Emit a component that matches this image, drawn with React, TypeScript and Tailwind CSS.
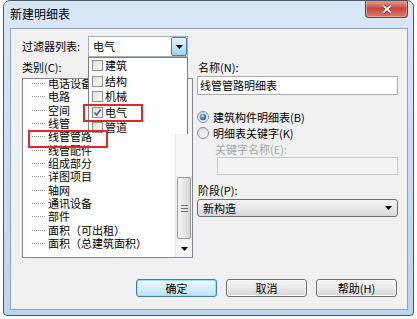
import React from "react";

const treeItems = [
  "电话设备",
  "电路",
  "空间",
  "线管",
  "线管管路",
  "线管配件",
  "组成部分",
  "详图项目",
  "轴网",
  "通讯设备",
  "部件",
  "面积（可出租）",
  "面积（总建筑面积）",
];

const filterItems = ["建筑", "结构", "机械", "电气", "管道"];

function DownArrow() {
  return (
    <svg width="7" height="4" viewBox="0 0 7 4">
      <path d="M0 0H7L3.5 4Z" fill="#000" />
    </svg>
  );
}

function UpArrow() {
  return (
    <svg width="7" height="4" viewBox="0 0 7 4">
      <path d="M0 4H7L3.5 0Z" fill="#000" />
    </svg>
  );
}

function RadioOn() {
  return (
    <svg width="12" height="12" viewBox="0 0 12 12">
      <defs>
        <linearGradient id="rOnBg" x1="0" y1="0" x2="1" y2="1">
          <stop offset="0" stopColor="#d0d0d0" />
          <stop offset="1" stopColor="#ffffff" />
        </linearGradient>
        <radialGradient id="rOnDot" cx="0.4" cy="0.35" r="0.7">
          <stop offset="0" stopColor="#b9e1fb" />
          <stop offset="0.5" stopColor="#3f8ad0" />
          <stop offset="1" stopColor="#1d4f8a" />
        </radialGradient>
      </defs>
      <circle cx="6" cy="6" r="5.5" fill="url(#rOnBg)" stroke="#8e8f8f" />
      <circle cx="6" cy="6" r="3.2" fill="url(#rOnDot)" />
    </svg>
  );
}

function RadioOff() {
  return (
    <svg width="12" height="12" viewBox="0 0 12 12">
      <defs>
        <linearGradient id="rOffBg" x1="0" y1="0" x2="1" y2="1">
          <stop offset="0" stopColor="#cfcfcf" />
          <stop offset="1" stopColor="#ffffff" />
        </linearGradient>
      </defs>
      <circle cx="6" cy="6" r="5.5" fill="url(#rOffBg)" stroke="#8e8f8f" />
      <circle cx="6" cy="6" r="3.5" fill="#ececec" />
    </svg>
  );
}

function Scrollbar() {
  return (
    <div className="w-[17px] flex flex-col bg-[#f5f5f5] border-l border-[#e8e8e8] shrink-0">
      <div className="h-[17px] flex items-center justify-center">
        <UpArrow />
      </div>
      <div className="h-[81px]" />
      <div className="h-[62px] mx-[1px] rounded-[2px] border border-[#979797] bg-gradient-to-r from-[#f6f6f6] to-[#d6d6d6] flex flex-col items-center justify-center gap-[2px]">
        <div className="w-[7px] h-px bg-[#6e6e6e]" />
        <div className="w-[7px] h-px bg-[#6e6e6e]" />
        <div className="w-[7px] h-px bg-[#6e6e6e]" />
      </div>
      <div className="flex-1" />
      <div className="h-[17px] flex items-center justify-center">
        <DownArrow />
      </div>
    </div>
  );
}

export default function App() {
  return (
    <div className="w-[417px] h-[319px] bg-white overflow-hidden font-['Noto_Sans_CJK_SC',sans-serif] text-[11px] leading-none text-black">
      <div className="ml-[3px] w-[411px] h-[316px] flex flex-col border border-[#4b5665] rounded-t-[7px] rounded-b-[4px] bg-gradient-to-b from-[#d8e7f6] to-[#bdd4ed] overflow-hidden">
        {/* Title bar */}
        <div className="h-[27px] flex justify-between items-start shrink-0">
          <span className="pl-[6px] pt-[6px] text-[12px] leading-[14px]">新建明细表</span>
          <div className="-mt-px mr-[5px] w-[43px] h-[18px] rounded-b-[4px] border border-t-0 border-[#6e3a34] bg-gradient-to-b from-[#e8a498] via-[#c8473b] to-[#d87a6a] flex items-center justify-center shadow-[inset_0_0_0_1px_rgba(255,255,255,0.35)]">
            <svg width="12" height="10" viewBox="0 0 12 10">
              <path d="M2 1.5 L10 8.5 M10 1.5 L2 8.5" stroke="#5a1e18" strokeWidth="3.4" />
              <path d="M2 1.5 L10 8.5 M10 1.5 L2 8.5" stroke="#ffffff" strokeWidth="2" />
            </svg>
          </div>
        </div>

        {/* Body */}
        <div className="flex">
          <div className="w-[6px] shrink-0" />
          <div className="relative w-[398px] h-[282px] shrink-0 border border-[#8ea3bd] bg-[#f0f0f0] pl-[11px] pr-[9px] pt-[7px] flex flex-col">
            {/* Filter row */}
            <div className="flex items-center h-[21px]">
              <span className="w-[66px]">过滤器列表:</span>
              <div className="w-[100px] h-[21px] flex items-center border border-[#a5acb5] bg-white">
                <span className="flex-1 pl-[4px]">电气</span>
                <div className="w-[16px] h-[19px] flex items-center justify-center border border-[#3c7fb1] rounded-[2px] bg-gradient-to-b from-[#e6f5fd] to-[#9fd3f1]">
                  <DownArrow />
                </div>
              </div>
            </div>

            {/* Main row */}
            <div className="flex mt-[3px]">
              {/* Left column */}
              <div className="w-[171px] flex flex-col shrink-0">
                <div className="h-[14px] leading-[14px]">类别(C):</div>
                <div className="mt-[4px] h-[180px] border border-[#828790] bg-white flex overflow-hidden">
                  <div className="flex-1 -mt-[2px] overflow-hidden">
                    {treeItems.map((t) => (
                      <div key={t} className="h-[13.33px] flex items-center">
                        <div className="ml-[9px] w-[13px] border-t border-dotted border-[#8a8a8a]" />
                        <span className="ml-[3px] whitespace-nowrap">{t}</span>
                      </div>
                    ))}
                  </div>
                  <Scrollbar />
                </div>
              </div>

              {/* Right column */}
              <div className="ml-[4px] w-[201px] flex flex-col shrink-0">
                <div className="h-[14px] leading-[14px] pl-[1px]">名称(N):</div>
                <div className="mt-[2px] h-[19px] border border-[#abadb3] bg-white pl-[2px] flex items-center">
                  线管管路明细表
                </div>
                <div className="mt-[15px] h-[14px] flex items-center">
                  <RadioOn />
                  <span className="ml-[4px]">建筑构件明细表(B)</span>
                </div>
                <div className="mt-[2px] h-[14px] flex items-center">
                  <RadioOff />
                  <span className="ml-[4px]">明细表关键字(K)</span>
                </div>
                <div className="mt-[2px] h-[14px] leading-[14px] pl-[18px] text-[#a3a3a3]">关键字名称(E):</div>
                <div className="mt-[1px] ml-[20px] h-[18px] border border-[#c9c9c9] bg-[#f3f3f3]" />
                <div className="mt-[8px] h-[14px] leading-[14px] pl-[1px]">阶段(P):</div>
                <div className="mt-[2px] h-[18px] flex items-center justify-between border border-[#707070] rounded-[3px] bg-gradient-to-b from-[#f3f3f3] via-[#e8e8e8] to-[#d6d6d6] pl-[5px] pr-[5px]">
                  <span>新构造</span>
                  <DownArrow />
                </div>
              </div>
            </div>

            {/* Buttons */}
            <div className="mt-[21px] mr-[1px] flex justify-end gap-[9px]">
              <div className="w-[81px] h-[18px] flex items-center justify-center rounded-[3px] border border-[#3c7fb1] bg-gradient-to-b from-[#eef8fd] to-[#bfe3f7] shadow-[inset_0_0_0_1px_#9fdcf8]">
                确定
              </div>
              <div className="w-[81px] h-[18px] flex items-center justify-center rounded-[3px] border border-[#707070] bg-gradient-to-b from-[#f4f4f4] via-[#e9e9e9] to-[#d4d4d4] shadow-[inset_0_0_0_1px_#fbfbfb]">
                取消
              </div>
              <div className="w-[81px] h-[18px] flex items-center justify-center rounded-[3px] border border-[#707070] bg-gradient-to-b from-[#f4f4f4] via-[#e9e9e9] to-[#d4d4d4] shadow-[inset_0_0_0_1px_#fbfbfb]">
                帮助(H)
              </div>
            </div>

            {/* Dropdown list overlay */}
            <div className="absolute left-[77px] top-[28px] w-[100px] h-[77px] border-x border-t border-[#7f7f7f] bg-white overflow-hidden">
              {filterItems.map((t, i) => (
                <div key={t} className="h-[15.5px] flex items-center">
                  <div className="ml-[3px] w-[11px] h-[11px] border border-[#8e8f8f] bg-gradient-to-br from-[#dcdcdc] to-[#ffffff] flex items-center justify-center">
                    {i === 3 && (
                      <svg width="9" height="9" viewBox="0 0 9 9">
                        <path d="M1.5 4.5 L3.6 7 L7.8 1.5" stroke="#3e5a8c" strokeWidth="1.5" fill="none" />
                      </svg>
                    )}
                  </div>
                  <span className="ml-[2px]">{t}</span>
                </div>
              ))}
            </div>

            {/* Red highlight boxes */}
            <div className="absolute left-[72px] top-[75px] w-[60px] h-[18px] border-2 border-[#e0262b]" />
            <div className="absolute left-[17px] top-[101px] w-[80px] h-[18px] border-2 border-[#e0262b]" />
          </div>
          <div className="w-[5px] shrink-0" />
        </div>
      </div>
    </div>
  );
}
